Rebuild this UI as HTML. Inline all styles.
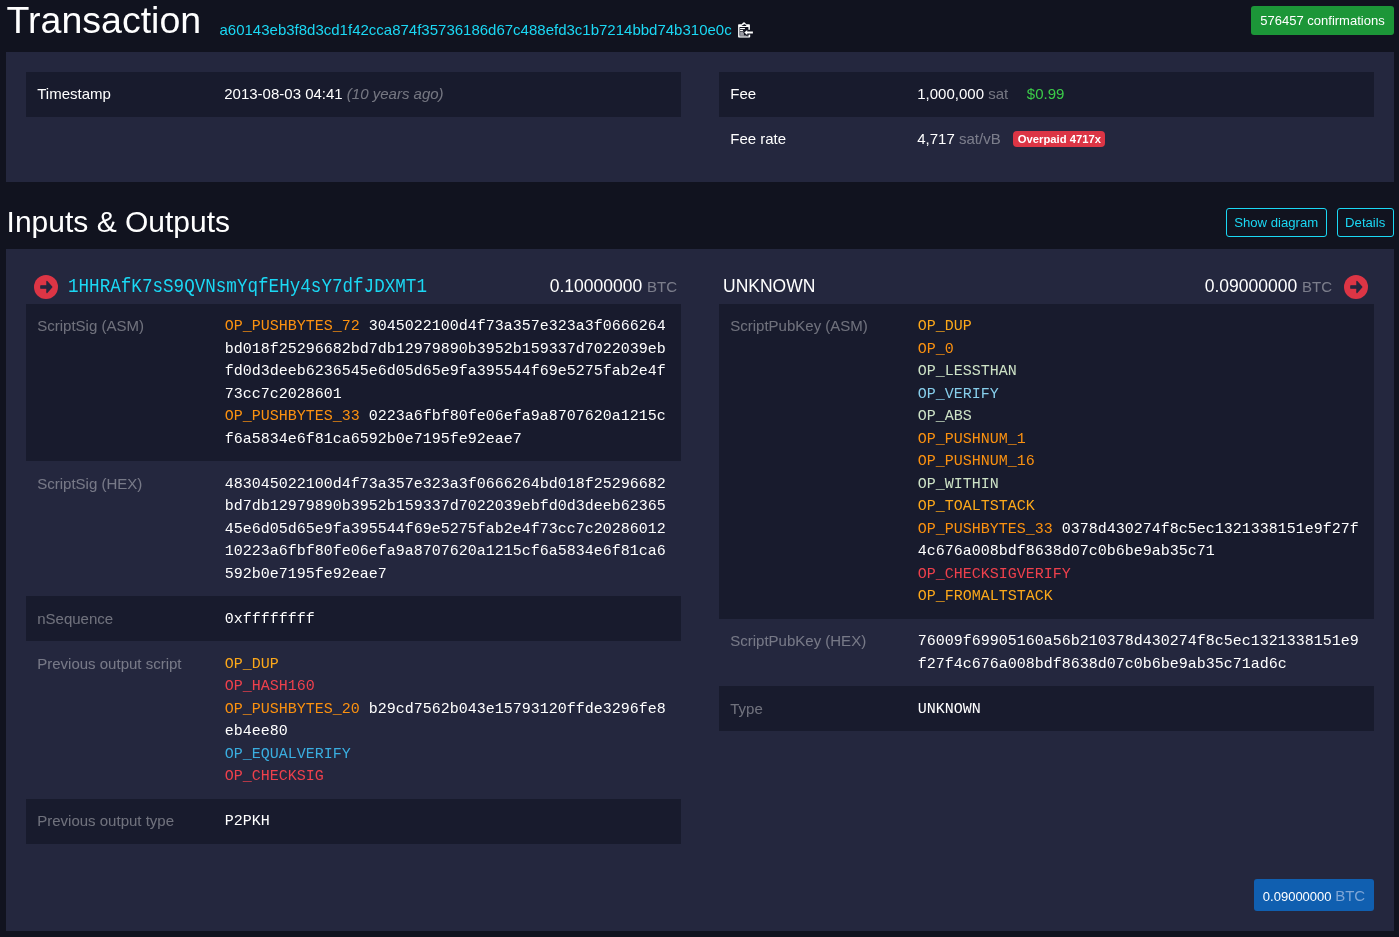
<!DOCTYPE html>
<html><head><meta charset="utf-8">
<style>
*{box-sizing:border-box;margin:0;padding:0}
html,body{width:1399px;height:937px;overflow:hidden;background:#11131f;color:#fff;font-family:"Liberation Sans",sans-serif;font-size:15px;line-height:22.5px}
.abs{position:absolute}
h1{position:absolute;left:6.6px;top:-2px;font-size:37.5px;font-weight:400;line-height:44px;white-space:nowrap}
.txid{position:absolute;left:219.5px;top:19px;color:#1bd8f4;font-size:15px;white-space:nowrap}
.conf{position:absolute;left:1251px;top:6px;width:143px;height:29px;background:#1c9638;border-radius:3px;color:#fff;font-size:13px;line-height:29px;text-align:center}
.box{position:absolute;left:6px;width:1388px;background:#24273e}
.tbl{position:absolute;width:655px}
.row{position:relative;padding:11.25px}
.row.d{background:#181b2d}
.row.h{padding-top:11.75px}
.row.h .lbl{top:11.75px}
.lbl{position:absolute;left:11.25px;top:11.25px;white-space:nowrap}
.val{margin-left:187px;white-space:nowrap}
.val.mono{position:relative;top:1px;left:0.5px}
.g{color:rgba(255,255,255,.4)}
.mono{font-family:"Liberation Mono",monospace}
.badge-red{display:inline-block;background:#dc3545;color:#fff;font-weight:700;font-size:11.25px;line-height:16px;padding:0 3.5px 0 4.5px;border-radius:4px;vertical-align:1px}
h2{position:absolute;left:6.6px;top:203.6px;font-size:30px;font-weight:400;line-height:36px;white-space:nowrap}
.btn{position:absolute;top:208px;height:29px;border:1px solid #1bd8f4;border-radius:3px;color:#1bd8f4;font-size:13.15px;line-height:27px;text-align:center;text-indent:-0.6px}
.lab{color:rgba(255,255,255,.38)}
.addr{color:#1bd8f4;font-size:17.6px;line-height:26px;white-space:nowrap;transform:scaleY(1.1);transform-origin:0 18px}
.amt{font-size:17.5px;line-height:26px;white-space:nowrap;margin-top:-1px}
.sym{color:rgba(255,255,255,.4);font-size:15px}
.foot{left:1248px;top:630px;width:120px;height:32px;background:#105fb0;border-radius:3px;font-size:13px;line-height:33px;text-align:center;white-space:nowrap}

.c-stack{color:#fca81a}
.c-const{color:#fb9110}
.c-crypto{color:#ee404c}
.c-ctrl{color:#3aaee0}
.c-arith{color:#cde2c6}
.c-verify{color:#87ceeb}
</style></head><body><div style="will-change:transform;position:absolute;left:0;top:0;width:1399px;height:937px">
<h1>Transaction</h1>
<div class="txid">a60143eb3f8d3cd1f42cca874f35736186d67c488efd3c1b7214bbd74b310e0c</div>
<svg class="abs" style="left:734px;top:19px" width="22" height="22" viewBox="0 0 22 22">
<path d="M5.1 5.3h2.7l1.2-1.6c.5-.7 1.5-.7 2 0l1.2 1.6h2.7c.6 0 1 .4 1 1v4.5h-1.5V8.1H5.5v8.7h9.2v-1.3h1.5v2.1c0 .6-.4 1-1 1H5.1c-.6 0-1-.4-1-1V6.3c0-.6.4-1 1-1z" fill="#fff"/>
<rect x="5.5" y="16.8" width="9.2" height="1.5" fill="#b4b5bb"/>
<path d="M7.4 7.1h5.2l-1.3-1.5c-.6-.6-1-.6-1.6 0z" fill="#11131f"/>
<rect x="6.1" y="9" width="4.8" height="1.1" fill="#fff"/>
<rect x="6.1" y="11" width="2.8" height="1.1" fill="#fff"/>
<rect x="6.1" y="12.6" width="3.8" height="4.2" fill="#9a9ba3"/>
<path d="M9.2 13.5l4.3-4.1v2.4h6v3.4h-6v2.4z" fill="#11131f"/>
<path d="M10.3 13.5l2.9-2.6v1.5h5.7v2.2h-5.7v1.5z" fill="#fff"/>
</svg>
<div class="conf">576457 confirmations</div>

<div class="box" style="top:52px;height:130px">
  <div class="tbl" style="left:20px;top:20px">
    <div class="row d"><span class="lbl">Timestamp</span><div class="val">2013-08-03 04:41 <i class="g">(10 years ago)</i></div></div>
  </div>
  <div class="tbl" style="left:713px;top:20px">
    <div class="row d"><span class="lbl">Fee</span><div class="val">1,000,000 <span class="g">sat</span> <span style="color:#3bcc49;margin-left:14.5px">$0.99</span></div></div>
    <div class="row"><span class="lbl">Fee rate</span><div class="val">4,717 <span class="g">sat/vB</span> <span class="badge-red" style="margin-left:8.5px">Overpaid 4717x</span></div></div>
  </div>
</div>

<h2>Inputs &amp; Outputs</h2>
<div class="btn" style="left:1226px;width:101px">Show diagram</div>
<div class="btn" style="left:1337px;width:57px">Details</div>

<div class="box" style="top:249px;height:682px">
  <svg class="abs" style="left:28px;top:26px" width="24" height="24" viewBox="0 0 24 24"><circle cx="12" cy="12" r="12" fill="#dc3545"/><path d="M6.8 10.8h6.1V6.4l4.9 5.6-4.9 5.6v-4.4H6.8z" fill="#24273e" stroke="#24273e" stroke-width="1.2" stroke-linejoin="round"/></svg>
  <div class="abs mono addr" style="left:62px;top:25px">1HHRAfK7sS9QVNsmYqfEHy4sY7dfJDXMT1</div>
  <div class="abs amt" style="right:717px;top:25px">0.10000000 <span class="sym">BTC</span></div>
  <div class="abs" style="left:717px;top:23.8px;font-size:17.5px;line-height:26px">UNKNOWN</div>
  <div class="abs amt" style="right:62px;top:25px">0.09000000 <span class="sym">BTC</span></div>
  <svg class="abs" style="left:1338px;top:26px" width="24" height="24" viewBox="0 0 24 24"><circle cx="12" cy="12" r="12" fill="#dc3545"/><path d="M6.8 10.8h6.1V6.4l4.9 5.6-4.9 5.6v-4.4H6.8z" fill="#24273e" stroke="#24273e" stroke-width="1.2" stroke-linejoin="round"/></svg>

  <div class="tbl mono-v" style="left:20px;top:55px">
    <div class="row d" style="height:157px"><span class="lbl lab">ScriptSig (ASM)</span><div class="val mono">
      <div><span class="c-const">OP_PUSHBYTES_72</span> 3045022100d4f73a357e323a3f0666264</div>
      <div>bd018f25296682bd7db12979890b3952b159337d7022039eb</div>
      <div>fd0d3deeb6236545e6d05d65e9fa395544f69e5275fab2e4f</div>
      <div>73cc7c2028601</div>
      <div><span class="c-const">OP_PUSHBYTES_33</span> 0223a6fbf80fe06efa9a8707620a1215c</div>
      <div>f6a5834e6f81ca6592b0e7195fe92eae7</div>
    </div></div>
    <div class="row h" style="height:135px"><span class="lbl lab">ScriptSig (HEX)</span><div class="val mono">
      <div>483045022100d4f73a357e323a3f0666264bd018f25296682</div>
      <div>bd7db12979890b3952b159337d7022039ebfd0d3deeb62365</div>
      <div>45e6d05d65e9fa395544f69e5275fab2e4f73cc7c20286012</div>
      <div>10223a6fbf80fe06efa9a8707620a1215cf6a5834e6f81ca6</div>
      <div>592b0e7195fe92eae7</div>
    </div></div>
    <div class="row d h" style="height:45px"><span class="lbl lab">nSequence</span><div class="val mono">0xffffffff</div></div>
    <div class="row h" style="height:158px"><span class="lbl lab">Previous output script</span><div class="val mono">
      <div class="c-stack">OP_DUP</div>
      <div class="c-crypto">OP_HASH160</div>
      <div><span class="c-const">OP_PUSHBYTES_20</span> b29cd7562b043e15793120ffde3296fe8</div>
      <div>eb4ee80</div>
      <div class="c-ctrl">OP_EQUALVERIFY</div>
      <div class="c-crypto">OP_CHECKSIG</div>
    </div></div>
    <div class="row d" style="height:45px"><span class="lbl lab">Previous output type</span><div class="val mono">P2PKH</div></div>
  </div>

  <div class="tbl" style="left:713px;top:55px">
    <div class="row d" style="height:315px"><span class="lbl lab">ScriptPubKey (ASM)</span><div class="val mono">
      <div class="c-stack">OP_DUP</div>
      <div class="c-const">OP_0</div>
      <div class="c-arith">OP_LESSTHAN</div>
      <div class="c-verify">OP_VERIFY</div>
      <div class="c-arith">OP_ABS</div>
      <div class="c-const">OP_PUSHNUM_1</div>
      <div class="c-const">OP_PUSHNUM_16</div>
      <div class="c-arith">OP_WITHIN</div>
      <div class="c-stack">OP_TOALTSTACK</div>
      <div><span class="c-const">OP_PUSHBYTES_33</span> 0378d430274f8c5ec1321338151e9f27f</div>
      <div>4c676a008bdf8638d07c0b6be9ab35c71</div>
      <div class="c-crypto">OP_CHECKSIGVERIFY</div>
      <div class="c-stack">OP_FROMALTSTACK</div>
    </div></div>
    <div class="row" style="height:67px"><span class="lbl lab">ScriptPubKey (HEX)</span><div class="val mono">
      <div>76009f69905160a56b210378d430274f8c5ec1321338151e9</div>
      <div>f27f4c676a008bdf8638d07c0b6be9ab35c71ad6c</div>
    </div></div>
    <div class="row d h" style="height:45px"><span class="lbl lab">Type</span><div class="val mono">UNKNOWN</div></div>
  </div>

  <div class="abs foot">0.09000000 <span style="color:#7fa6d6;font-size:15px">BTC</span></div>
</div>
</div></body></html>
